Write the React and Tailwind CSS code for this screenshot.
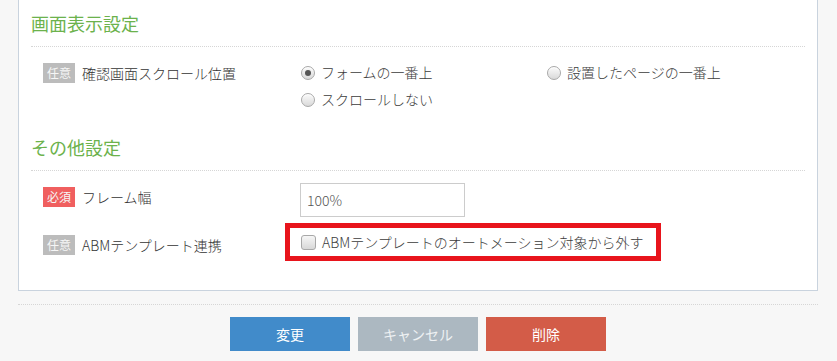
import React from "react";

function Badge({ kind }) {
  const req = kind === "必須";
  return (
    <span
      className={
        "inline-flex h-[20px] w-[32px] shrink-0 items-center justify-center text-[12px] font-normal leading-none text-[#f6f6f6] " +
        (req ? "bg-[#f05f5f]" : "bg-[#bcbcbc]")
      }
    >
      {kind}
    </span>
  );
}

function Heading({ children }) {
  return (
    <div className="border-b border-dotted border-[#d6d6d6] pt-[8px] pb-[8px]">
      <h2 className="h-[30px] text-[18px] leading-[30px] font-normal text-[#6cb24c]">{children}</h2>
    </div>
  );
}

function Radio({ checked, label }) {
  return (
    <label className="flex h-[27px] items-center gap-[6px] text-[14px] text-[#3c3c3c]">
      <span className="ml-px flex h-[14px] w-[14px] items-center justify-center rounded-full border border-[#a8a8a8] bg-[linear-gradient(#fbfbfb,#d9d9d9)] shadow-[inset_0_1px_0_#fff]">
        {checked && <span className="h-[6px] w-[6px] rounded-full bg-[#555]" />}
      </span>
      <span>{label}</span>
    </label>
  );
}

export default function App() {
  return (
    <div className="min-h-[361px] bg-[#f7f7f7] px-[18px] font-['Noto_Sans_CJK_JP',sans-serif] font-light text-[#333]">
      <div className="w-[800px] border-x border-b border-[#c9d3de] bg-white px-[12px] pb-[29px]">
        <Heading>画面表示設定</Heading>
        <div className="flex pt-[12px] pb-[11px]">
          <div className="flex h-[27px] w-[269px] shrink-0 items-center gap-[7px] pl-[12px]">
            <Badge kind="任意" />
            <span className="text-[14px] leading-[20px]">確認画面スクロール位置</span>
          </div>
          <div className="grid grid-cols-[246px_auto]">
            <Radio checked label="フォームの一番上" />
            <Radio label="設置したページの一番上" />
            <Radio label="スクロールしない" />
          </div>
        </div>
        <Heading>その他設定</Heading>
        <div className="flex pt-[12px]">
          <div className="flex w-[269px] shrink-0 items-center gap-[7px] self-start pt-[4px] pl-[12px]">
            <Badge kind="必須" />
            <span className="text-[14px] leading-[20px]">フレーム幅</span>
          </div>
          <div className="flex h-[34px] w-[165px] items-center border border-[#cccccc] bg-white pl-[6px] text-[14px] text-[#555]">
            100%
          </div>
        </div>
        <div className="flex pt-[6px]">
          <div className="flex w-[269px] shrink-0 items-center gap-[7px] self-start pt-[12px] pl-[12px]">
            <Badge kind="任意" />
            <span className="text-[14px] leading-[20px]">ABMテンプレート連携</span>
          </div>
          <div className="-ml-[15px] flex h-[38px] items-center gap-[6px] border-[5px] border-[#e8141c] pr-[12px] pl-[11px] text-[14px] text-[#3c3c3c]">
            <span className="h-[15px] w-[15px] rounded-[3px] border border-[#a8a8a8] bg-[linear-gradient(#f6f6f6,#d8d8d8)]" />
            <span>ABMテンプレートのオートメーション対象から外す</span>
          </div>
        </div>
      </div>
      <div className="mt-[13px] w-[800px] border-t border-dotted border-[#d6d6d6]" />
      <div className="flex w-[800px] justify-center gap-[8px] pt-[12px]">
        <button className="h-[34px] w-[120px] bg-[#418bca] text-[14px] font-normal text-white">変更</button>
        <button className="h-[34px] w-[120px] bg-[#acb8c1] text-[14px] font-normal text-[#eef1f3]">キャンセル</button>
        <button className="h-[34px] w-[120px] bg-[#d35c48] text-[14px] font-normal text-white">削除</button>
      </div>
    </div>
  );
}
